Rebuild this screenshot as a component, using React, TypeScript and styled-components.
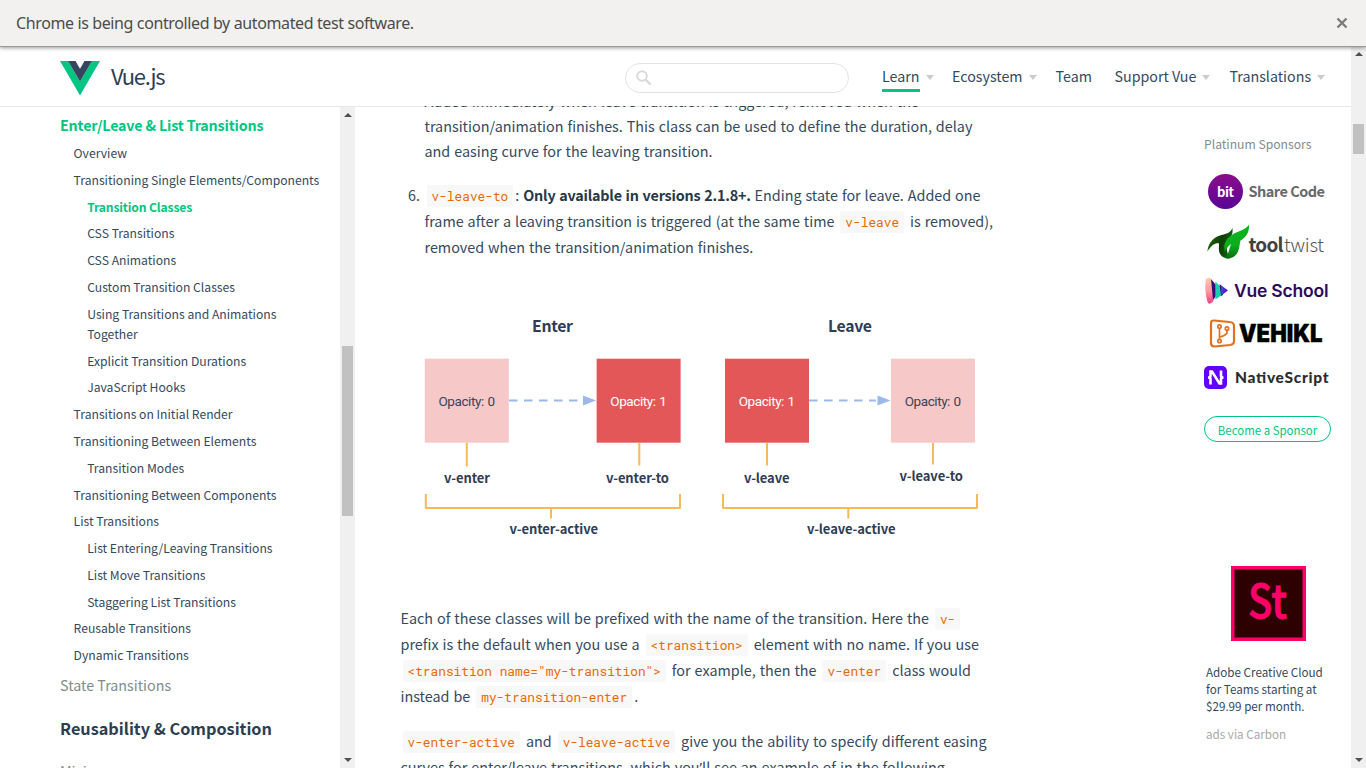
import React from "react";
import styled, { createGlobalStyle } from "styled-components";

const sans = `"Noto Sans CJK SC", "Noto Sans", sans-serif`;
const mono = `"Roboto Mono", "Liberation Mono", monospace`;
const navy = "#34495e";
const green = "#00c583";

const GlobalStyle = createGlobalStyle`
  * { box-sizing: border-box; }
  body { margin: 0; background: #fff; color: ${navy}; font-family: ${sans}; overflow: hidden; }
`;

const Page = styled.div`
  height: 768px;
  display: flex;
  flex-direction: column;
  overflow: hidden;
`;

const InfoBar = styled.div`
  position: relative;
  z-index: 3;
  flex: none;
  height: 47px;
  padding: 0 17px 0 16px;
  display: flex;
  align-items: center;
  justify-content: space-between;
  background: #f2f1ef;
  border-bottom: 1px solid #999;
  box-shadow: 0 1px 4px rgba(0, 0, 0, 0.4);
  color: #4c4c4c;
  font: 16px/46px "Noto Sans", sans-serif;
  white-space: nowrap;
`;
const InfoText = styled.span`
  letter-spacing: -0.38px;
`;

const Window = styled.div`
  flex: 1;
  min-height: 0;
  display: flex;
`;
const Site = styled.div`
  flex: 1;
  min-width: 0;
  display: flex;
  flex-direction: column;
`;

const Header = styled.header`
  position: relative;
  z-index: 1;
  flex: none;
  height: 59px;
  padding-left: 60px;
  display: flex;
  align-items: center;
  box-shadow: 0 1px 0 rgba(0, 0, 0, 0.09);
`;
const Brand = styled.div`
  width: 565px;
  display: flex;
  align-items: center;
  gap: 11px;
  font-size: 22px;
  line-height: 38px;
  letter-spacing: -1.2px;
  color: #2c3e50;
  svg { margin-top: 3px; }
`;
const BrandName = styled.span`
  margin-top: -3px;
`;
const SearchBox = styled.div`
  width: 224px;
  height: 30px;
  margin-top: 2px;
  padding: 1px 0 0 10px;
  display: flex;
  align-items: center;
  border: 1px solid #e3e3e3;
  border-radius: 15px;
`;
const Nav = styled.nav`
  display: flex;
  margin: 0 0 0 33px;
`;
const NavItem = styled.div<{ $w: number }>`
  width: ${(p) => p.$w}px;
  display: flex;
  align-items: flex-start;
  gap: 6px;
  white-space: nowrap;
`;
const NavLabel = styled.span<{ $active?: boolean }>`
  height: 31px;
  font-size: 14.27px;
  line-height: 30px;
  border-bottom: 3px solid ${(p) => (p.$active ? green : "transparent")};
`;
const Caret = styled.i`
  margin-top: 14px;
  border: 4px solid transparent;
  border-top: 5px solid #ccc;
  border-bottom: 0;
`;

const Body = styled.div`
  flex: 1;
  min-height: 0;
  display: flex;
`;
const Sidebar = styled.aside`
  width: 340px;
  padding: 9px 0 0 60px;
  overflow: hidden;
  white-space: nowrap;
`;
const ChapterLink = styled.div<{ $active?: boolean }>`
  font-size: 14.3px;
  line-height: 20px;
  height: 27.95px;
  font-weight: ${(p) => (p.$active ? 600 : 400)};
  letter-spacing: ${(p) => (p.$active ? -0.18 : 0)}px;
  color: ${(p) => (p.$active ? green : "#7f8c8d")};
`;
const TocList = styled.div`
  padding-bottom: 3.3px;
`;
const TocLink = styled.div<{ $level: number; $active?: boolean }>`
  padding-left: ${(p) => p.$level * 13.6}px;
  margin-bottom: 6.8px;
  font-size: 12.17px;
  line-height: 20px;
  font-weight: ${(p) => (p.$active ? 600 : 400)};
  letter-spacing: ${(p) => (p.$active ? -0.16 : 0)}px;
  color: ${(p) => (p.$active ? green : navy)};
`;
const PartTitle = styled.h3`
  margin: 13.5px 0 22px;
  font-size: 16.27px;
  line-height: 22px;
  font-weight: 600;
  color: #2c3e50;
`;

const Track = styled.div<{ $inner?: boolean }>`
  flex: none;
  width: 15px;
  margin-top: ${(p) => (p.$inner ? 1 : 0)}px;
  padding: ${(p) => (p.$inner ? 6 : 5)}px 0 6px;
  display: flex;
  flex-direction: column;
  align-items: center;
  background: #f0f0f0;
`;
const Thumb = styled.div<{ $offset: number; $h: number }>`
  width: 11px;
  height: ${(p) => p.$h}px;
  margin: ${(p) => p.$offset}px 0 auto;
  background: #c1c1c1;
`;
const TrackArrow = styled.i<{ $down?: boolean }>`
  border: 4px solid transparent;
  border-${(p) => (p.$down ? "top" : "bottom")}-color: #505050;
  border-${(p) => (p.$down ? "bottom" : "top")}: 0;
`;

const Article = styled.main`
  width: 849px;
  padding-left: 45.5px;
  overflow: hidden;
  font-size: 14.36px;
  line-height: 26px;
  white-space: nowrap;
  word-spacing: 0.05em;
`;
const Steps = styled.ol`
  list-style: none;
  margin: -18px 0 0;
  padding-left: 24px;
`;
const Step = styled.li<{ $lh: number }>`
  line-height: ${(p) => p.$lh}px;
  margin-bottom: 18.2px;
`;
const Num = styled.span`
  display: inline-block;
  width: 16.5px;
  margin-left: -16.5px;
`;
const Para = styled.p`
  margin: 0 0 19px;
`;
const Apostrophe = styled.span`
  font-family: "Noto Sans", sans-serif;
  line-height: 1;
`;
const Code = styled.code`
  display: inline-block;
  margin: 0 2px;
  padding: 3px 5px;
  border-radius: 2px;
  background: #f8f8f8;
  color: #e96900;
  font: 12.8px/16px ${mono};
  word-spacing: 0;
`;
const Strong = styled.strong`
  font-weight: 600;
  letter-spacing: -0.2px;
  color: #273849;
`;
const Figure = styled.div`
  height: 327px;
  padding-top: 22px;
  svg { display: block; }
`;

const Sponsors = styled.aside`
  flex: 1;
  padding-top: 28px;
  white-space: nowrap;
`;
const SponsorTitle = styled.div`
  font-size: 12.15px;
  line-height: 20px;
  color: #7f8c8d;
`;
const LogoStack = styled.div`
  height: 254px;
  padding-top: 11px;
  svg { display: block; }
`;
const SponsorButton = styled.div`
  width: 127px;
  height: 26px;
  margin-top: 8px;
  border: 1px solid ${green};
  border-radius: 13px;
  color: ${green};
  font-size: 11.45px;
  line-height: 26px;
  text-align: center;
`;
const AdTile = styled.div`
  width: 75px;
  height: 75px;
  margin: 124px 0 22px 27px;
  svg { display: block; }
`;
const AdCopy = styled.div`
  padding-left: 2px;
  font-size: 11.65px;
  line-height: 17px;
`;
const AdVia = styled.div`
  padding: 11px 0 0 2px;
  font-size: 11.65px;
  line-height: 18px;
  color: #a8a8a8;
`;

const toc: { t: React.ReactNode; l: number; a?: boolean }[] = [
  { t: "Overview", l: 1 },
  { t: "Transitioning Single Elements/Components", l: 1 },
  { t: "Transition Classes", l: 2, a: true },
  { t: "CSS Transitions", l: 2 },
  { t: "CSS Animations", l: 2 },
  { t: "Custom Transition Classes", l: 2 },
  { t: <>Using Transitions and Animations<br />Together</>, l: 2 },
  { t: "Explicit Transition Durations", l: 2 },
  { t: "JavaScript Hooks", l: 2 },
  { t: "Transitions on Initial Render", l: 1 },
  { t: "Transitioning Between Elements", l: 1 },
  { t: "Transition Modes", l: 2 },
  { t: "Transitioning Between Components", l: 1 },
  { t: "List Transitions", l: 1 },
  { t: "List Entering/Leaving Transitions", l: 2 },
  { t: "List Move Transitions", l: 2 },
  { t: "Staggering List Transitions", l: 2 },
  { t: "Reusable Transitions", l: 1 },
  { t: "Dynamic Transitions", l: 1 },
];

const nav = [
  { t: "Learn", w: 70, menu: true, active: true },
  { t: "Ecosystem", w: 103.5, menu: true },
  { t: "Team", w: 59 },
  { t: "Support Vue", w: 115, menu: true },
  { t: "Translations", w: 100, menu: true },
];

const VueMark = () => (
  <svg width="40" height="35" viewBox="0 0 40 35">
    <path fill="#00c583" d="M0 0h8l12 20.500L32 0h8L20 34.600z" />
    <path fill="#35455e" d="M8 0h7.500L20 7.700 24.500 0H32L20 20.600z" />
  </svg>
);

const Box = ({ x, full }: { x: number; full?: boolean }) => (
  <g>
    <rect x={x} y="58.700" width="84" height="84" fill={full ? "#e45759" : "#f6c8c8"} />
    <text x={x + 13.7} y="105.500" textLength={56.5} fontFamily="Roboto" fontSize="13.5" fill={full ? "#fff" : "#3a4459"}>
      {full ? "Opacity: 1" : "Opacity: 0"}
    </text>
  </g>
);
const Label = ({ x, y, w, size = 13, children }: { x: number; y: number; w: number; size?: number; children: string }) => (
  <text x={x} y={y} textLength={w} fontSize={size} fontWeight="700" fill="#2f3c55" fontFamily={sans}>{children}</text>
);

const Diagram = () => (
  <svg width="595" height="250" viewBox="401 0 595 250">
    <Label x={532} y={32} w={41} size={15.8}>Enter</Label>
    <Label x={828} y={32} w={44} size={15.8}>Leave</Label>
    <Box x={424.8} />
    <Box x={596.6} full />
    <Box x={725} full />
    <Box x={891} />
    <g stroke="#9db8ea" strokeWidth="2" fill="none">
      <path d="M509 100.500H580" strokeDasharray="8.500 6.500" />
      <path d="M809 100.500H876" strokeDasharray="8.500 6.500" />
    </g>
    <path d="M583 95.500v10l13-5zM877.500 95.500v10l13-5z" fill="#9db8ea" />
    <g stroke="#f7ba5b" strokeWidth="2" fill="none" strokeLinejoin="round">
      <path d="M466.800 142.700V166.500M639.300 142.700V165.500M767 142.700V165.500M933 142.700V164.500" />
      <path d="M425.800 194V208H680V194M551 208V218.500" />
      <path d="M723 194V208H977V194M848.300 208V218.500" />
    </g>
    <Label x={444} y={183} w={46}>v-enter</Label>
    <Label x={606} y={182.5} w={63}>v-enter-to</Label>
    <Label x={744} y={183} w={45.5}>v-leave</Label>
    <Label x={899.5} y={181} w={63.5}>v-leave-to</Label>
    <Label x={509.5} y={234} w={88.5}>v-enter-active</Label>
    <Label x={807} y={234} w={88.5}>v-leave-active</Label>
  </svg>
);

const LogoSvg = styled.svg`
  margin-left: -4px;
`;

const SponsorLogos = () => (
  <LogoSvg width="136" height="225" viewBox="1200 165 136 225">
    <defs>
      <linearGradient id="bit" x2="0" y2="1"><stop stopColor="#8a0d8c" /><stop offset="1" stopColor="#5a0596" /></linearGradient>
      <linearGradient id="leafL" x1="0" x2="1" y1="0.300" y2="0.600"><stop stopColor="#1f6b0a" /><stop offset=".55" stopColor="#123b06" /><stop offset="1" stopColor="#0c7014" /></linearGradient>
      <linearGradient id="leafR" x2="0" y2="1"><stop stopColor="#09b41b" /><stop offset=".6" stopColor="#0bb01c" /><stop offset="1" stopColor="#0a6c10" /></linearGradient>
      <linearGradient id="vs" x2="0" y2="1"><stop stopColor="#ffc9b0" /><stop offset=".5" stopColor="#ff9aa0" /><stop offset="1" stopColor="#ff3b86" /></linearGradient>
    </defs>
    <circle cx="1225.500" cy="191.500" r="17.500" fill="url(#bit)" />
    <text x="1217" y="196.500" textLength="17" fontSize="13" fontWeight="700" fill="#fff">bit</text>
    <text x="1248.500" y="196.500" textLength="76.500" fontSize="14.500" fontWeight="700" fill="#68686a">Share Code</text>

    <path fill="url(#leafL)" d="M1207.300 251.800C1208.500 241 1215 236.500 1221.500 235C1228 233.500 1231 232 1232.300 228C1233.300 232 1232 236 1229 239C1226 245 1226 252 1230 258.500C1223 259 1219 255 1218.800 249C1218.700 246 1219.500 244 1218.500 243C1214 243 1210 247 1207.300 251.800z" />
    <path fill="url(#leafR)" d="M1249 224.700C1249.500 232 1246 238 1240.500 240.500C1239.500 243 1240 247 1238 251.500C1236 256.500 1231 259.500 1225 258C1229 254 1229 249 1231 244C1228 246 1226 249 1225 252C1222.500 245 1226 238 1234 233.500C1240 230.500 1245 230 1249 224.700z" />
    <text x="1248.500" y="252" textLength="35" fontSize="19" fontWeight="700" fill="#404040">tool</text>
    <text x="1284" y="252" textLength="40" fontSize="19" fontWeight="300" fill="#555">twist</text>

    <path fill="url(#vs)" d="M1206 279Q1211 276 1211.500 280L1213.500 301Q1209 306 1207.500 302Q1204 290 1206 279z" />
    <path fill="#3b0a75" d="M1211 279l5 6v11l-3 4z" />
    <path fill="#16cfae" d="M1215.300 281.500l6 6v8l-6 4z" />
    <path fill="#3e1179" d="M1219.500 284l3.500 3v8l-2 1z" />
    <path fill="#3f6df0" d="M1221.500 285.500l6 4.500-6 5z" />
    <path fill="#5a1dc8" d="M1222.500 287l5.500 3.500-5.500 4z" />
    <text x="1234" y="296.500" textLength="94.500" fontFamily="Inter" fontSize="17.500" fontWeight="600" fill="#2b0a5c">Vue School</text>

    <path fill="none" stroke="#e2711d" strokeWidth="2.200" strokeLinejoin="round" d="M1214 320.500L1229.500 322Q1234 322.300 1234 326V341Q1234 344.500 1230 345L1214.500 346.500Q1211 346.500 1211 343V323.500Q1211 320.300 1214 320.500z" />
    <g fill="none" stroke="#e2711d" strokeWidth="1.700">
      <circle cx="1219.500" cy="326.500" r="1.700" /><circle cx="1227" cy="328.500" r="1.700" /><circle cx="1219.500" cy="341" r="1.700" />
      <path d="M1219.500 328.500V339M1227 330.500V333Q1225 336 1219.500 337" />
    </g>
    <text x="1239" y="342" textLength="83.500" fontFamily="Inter" fontSize="24" fontWeight="900" stroke="#000" strokeWidth=".4" fill="#000" lengthAdjust="spacingAndGlyphs">VEHIKL</text>

    <rect x="1204" y="366" width="23" height="23" rx="5" fill="#6200ff" />
    <path fill="none" stroke="#fff" strokeWidth="2.600" d="M1210.500 384.500V379Q1210.500 377.500 1208 377.500Q1210.500 377.500 1210.500 376V371.500H1212L1219.500 383.500H1221V379Q1221 377.500 1223.500 377.500Q1221 377.500 1221 376V370.500" />
    <text x="1235" y="383" textLength="93.500" fontFamily="Lato" fontSize="15.500" fontWeight="900" fill="#2c2c2c">NativeScript</text>
  </LogoSvg>
);

export default function App() {
  return (
    <Page>
      <GlobalStyle />
      <InfoBar>
        <InfoText>Chrome is being controlled by automated test software.</InfoText>
        <svg width="14" height="14" viewBox="0 0 14 14">
          <path d="M2.500 2.500l9 9m0-9l-9 9" stroke="#7b7a78" strokeWidth="2.300" />
        </svg>
      </InfoBar>
      <Window>
        <Site>
          <Header>
            <Brand><VueMark /><BrandName>Vue.js</BrandName></Brand>
            <SearchBox>
              <svg width="16" height="16" viewBox="0 0 16 16" fill="none" stroke="#d9d9d9" strokeWidth="1.900">
                <circle cx="6" cy="6" r="4.800" /><path d="M9.500 9.500l5 5" strokeWidth="2.400" />
              </svg>
            </SearchBox>
            <Nav>
              {nav.map((n) => (
                <NavItem key={n.t} $w={n.w}>
                  <NavLabel $active={n.active}>{n.t}</NavLabel>
                  {n.menu && <Caret />}
                </NavItem>
              ))}
            </Nav>
          </Header>
          <Body>
            <Sidebar>
              <ChapterLink $active>Enter/Leave &amp; List Transitions</ChapterLink>
              <TocList>
                {toc.map((i, k) => (
                  <TocLink key={k} $level={i.l} $active={i.a}>{i.t}</TocLink>
                ))}
              </TocList>
              <ChapterLink>State Transitions</ChapterLink>
              <PartTitle>Reusability &amp; Composition</PartTitle>
              <ChapterLink>Mixins</ChapterLink>
            </Sidebar>
            <Track $inner>
              <TrackArrow />
              <Thumb $offset={229} $h={170} />
              <TrackArrow $down />
            </Track>
            <Article>
              <Steps>
                <Step $lh={25.2}>
                  Added immediately when leave transition is triggered, removed when the<br />
                  transition/animation finishes. This class can be used to define the duration, delay<br />
                  and easing curve for the leaving transition.
                </Step>
                <Step $lh={26}>
                  <Num>6.</Num><Code>v-leave-to</Code>: <Strong>Only available in versions 2.1.8+.</Strong> Ending state for leave. Added one<br />
                  frame after a leaving transition is triggered (at the same time <Code>v-leave</Code> is removed),<br />
                  removed when the transition/animation finishes.
                </Step>
              </Steps>
              <Figure><Diagram /></Figure>
              <Para>
                Each of these classes will be prefixed with the name of the transition. Here the <Code>v-</Code><br />
                prefix is the default when you use a <Code>&lt;transition&gt;</Code> element with no name. If you use<br />
                <Code>&lt;transition name="my-transition"&gt;</Code> for example, then the <Code>v-enter</Code> class would<br />
                instead be <Code>my-transition-enter</Code>.
              </Para>
              <Para>
                <Code>v-enter-active</Code> and <Code>v-leave-active</Code> give you the ability to specify different easing<br />
                curves for enter/leave transitions, which you<Apostrophe>’</Apostrophe>ll see an example of in the following
              </Para>
            </Article>
            <Sponsors>
              <SponsorTitle>Platinum Sponsors</SponsorTitle>
              <LogoStack><SponsorLogos /></LogoStack>
              <SponsorButton>Become a Sponsor</SponsorButton>
              <AdTile>
                <svg width="75" height="75" viewBox="0 0 75 75">
                  <rect width="75" height="75" fill="#ff0068" />
                  <rect x="3.500" y="3.500" width="68" height="68" fill="#2d0002" />
                  <text x="17" y="52" textLength="39" lengthAdjust="spacingAndGlyphs" fontSize="46" fontWeight="500" stroke="#ff0068" strokeWidth=".8" fill="#ff0068">St</text>
                </svg>
              </AdTile>
              <AdCopy>Adobe Creative Cloud<br />for Teams starting at<br />$29.99 per month.</AdCopy>
              <AdVia>ads via Carbon</AdVia>
            </Sponsors>
          </Body>
        </Site>
        <Track>
          <TrackArrow />
          <Thumb $offset={68} $h={30} />
          <TrackArrow $down />
        </Track>
      </Window>
    </Page>
  );
}
